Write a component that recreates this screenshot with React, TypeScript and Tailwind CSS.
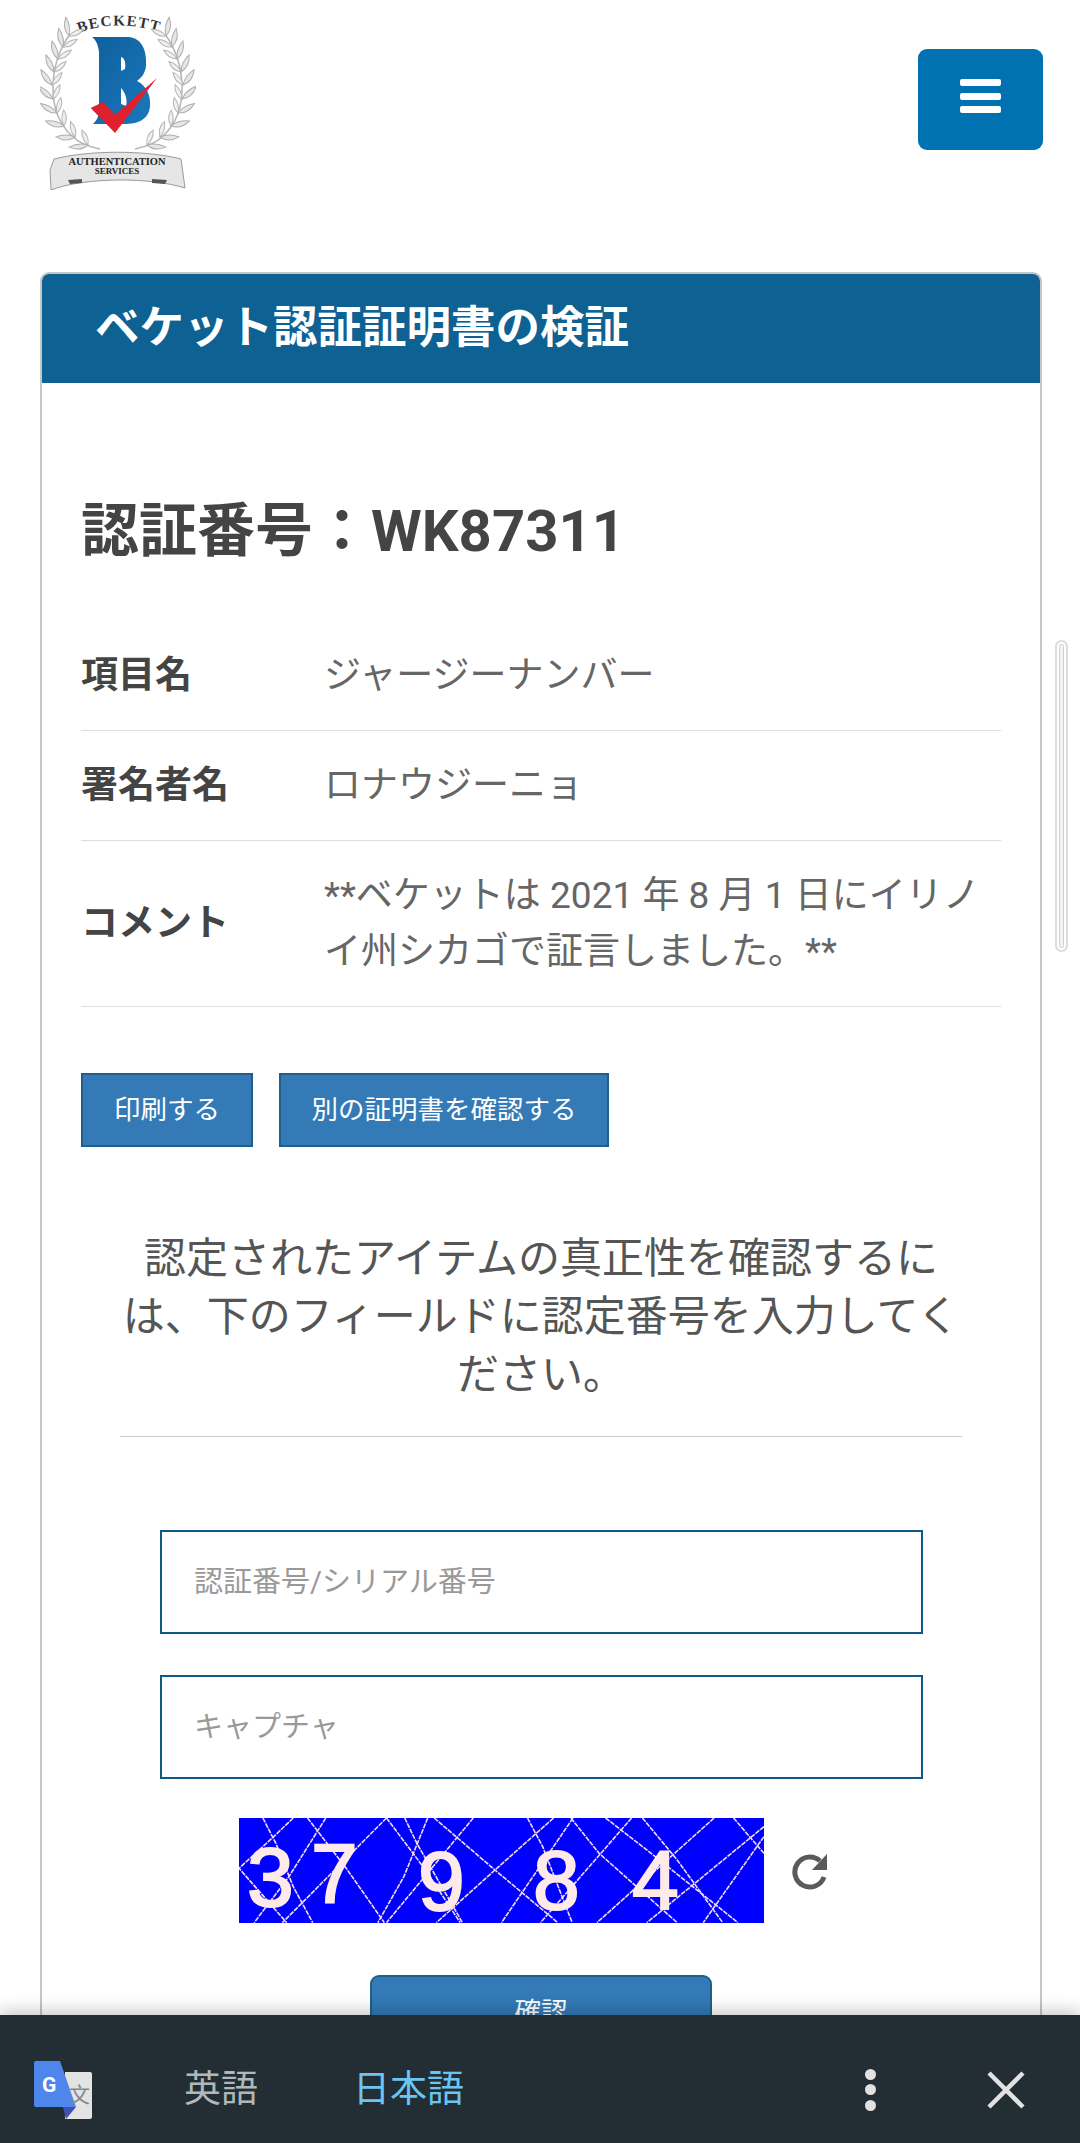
// stem of the left laurel branch, bottom to top
const stem = [
  [88, 145], [75, 137], [64, 126], [57, 113], [53, 99], [52, 85], [54, 72], [58, 59], [63, 47], [69, 36],
];

function Laurel() {
  return (
    <g>
      <path d="M70 34 C50 62 44 110 72 136 C80 144 90 147 100 149" fill="none" stroke="#b5b5b5" strokeWidth="1.5" />
      {stem.map(([x, y], i) => {
        const next = stem[Math.min(i + 1, stem.length - 1)];
        const prev = stem[Math.max(i - 1, 0)];
        const a = (Math.atan2(next[1] - prev[1], next[0] - prev[0]) * 180) / Math.PI;
        return (
          <g key={i}>
            <path d="M0 0 Q9 -6 19 0 Q9 4 0 0 Z" transform={`translate(${x} ${y}) rotate(${a - 38})`} fill="#e6e6e6" stroke="#adadad" strokeWidth="1" />
            <path d="M0 0 Q8 -4 16 0 Q8 5 0 0 Z" transform={`translate(${x} ${y}) rotate(${a + 36})`} fill="#efefef" stroke="#b5b5b5" strokeWidth="1" />
          </g>
        );
      })}
    </g>
  );
}

function Logo() {
  return (
    <svg viewBox="40 14 156 176" className="w-[156px] h-[176px]">
      <defs>
        <linearGradient id="bBlue" x1="0" y1="0" x2="1" y2="1">
          <stop offset="0" stopColor="#0f5f9c" />
          <stop offset="1" stopColor="#1a78bd" />
        </linearGradient>
        <path id="beckettArc" d="M79 33 Q118 18 162 33" fill="none" />
      </defs>
      <text fontFamily="'Liberation Serif', serif" fontWeight="700" fontSize="15" fill="#333" letterSpacing="1.4">
        <textPath href="#beckettArc">BECKETT</textPath>
      </text>
      <Laurel />
      <g transform="translate(235 0) scale(-1 1)">
        <Laurel />
      </g>
      <path d="M92 37 H128 C143 38 147 52 146 66 C145 74 141 78 137 81 C147 86 151 96 150 107 C148 120 138 124 124 124 H93 C97 120 99 116 99 110 V52 C98 44 96 40 92 37 Z" fill="url(#bBlue)" />
      <path d="M121 57 C125 58 126 64 125 69 L121 71 Z M121 88 C125 92 128 100 126 106 L121 104 Z" fill="#fff" />
      <path d="M90.7 108 L103 102 L115 115 L157 78 L115 133 Z" fill="#e0202c" />
      <path d="M54 159 C90 150 145 150 181 159 L185 188 C150 177 85 177 51 190 L50 170 Z" fill="#e6e6e6" stroke="#9a9a9a" strokeWidth="1" />
      <path d="M68 180 L82 179 L82 183 L70 184 Z M152 179 L167 180 L165 184 L152 183 Z" fill="#555" />
      <text x="117" y="165" textAnchor="middle" fontFamily="'Liberation Serif', serif" fontWeight="700" fontSize="10.5" fill="#222">AUTHENTICATION</text>
      <text x="117" y="174" textAnchor="middle" fontFamily="'Liberation Serif', serif" fontWeight="700" fontSize="9" fill="#222">SERVICES</text>
    </svg>
  );
}

// captcha noise, points read off the crop
const noise = [
  [[145, 84], [175, 160], [215, 290], [260, 398]],
  [[215, 84], [170, 140], [90, 235], [200, 398]],
  [[290, 84], [205, 260], [125, 398]],
  [[248, 84], [340, 240], [425, 398]],
  [[430, 84], [190, 398]],
  [[430, 84], [520, 240], [600, 398]],
  [[472, 84], [500, 160], [605, 398]],
  [[525, 84], [470, 260], [410, 398]],
  [[540, 84], [680, 240], [825, 398]],
  [[630, 84], [430, 398]],
  [[815, 84], [680, 240], [545, 398]],
  [[755, 84], [790, 170], [858, 398]],
  [[860, 84], [695, 398]],
  [[855, 84], [920, 190], [1100, 398]],
  [[995, 84], [785, 398]],
  [[935, 84], [1040, 190], [1240, 398]],
  [[1020, 84], [1100, 210], [1205, 398]],
  [[1185, 84], [915, 398]],
  [[1300, 110], [1030, 398]],
  [[1230, 84], [1300, 190]],
  [[1300, 140], [1160, 398]],
];

const digits: [string, number, number][] = [
  ["3", 8, 88],
  ["7", 72, 84],
  ["9", 179, 92],
  ["8", 294, 91],
  ["4", 393, 91],
];

function Captcha() {
  return (
    <svg viewBox="0 0 525 105" className="w-[525px] h-[105px] bg-[#0000ff]">
      {noise.map((line, i) => (
        <polyline
          key={i}
          points={line.map(([x, y]) => `${(x - 90) / 2.305},${(y - 84) / 3}`).join(" ")}
          fill="none"
          stroke="#f3dcf0"
          strokeWidth="1.6"
          strokeDasharray="5 1"
        />
      ))}
      {digits.map(([d, x, y]) => (
        <text key={d} x={x} y={y} fontFamily="'Liberation Sans', sans-serif" fontSize="84" fill="#ffeaea" stroke="#ffeaea" strokeWidth="2">
          {d}
        </text>
      ))}
    </svg>
  );
}

function TranslateIcon() {
  return (
    <svg viewBox="0 0 58 58" className="w-[58px] h-[58px] shrink-0">
      <path d="M31 11 H56 Q58 11 58 13 V56 Q58 58 56 58 H31 Z" fill="#e3e3e3" />
      <path d="M29 46 H42 L32 58 Z" fill="#3f51b5" />
      <path d="M2 0 H26 L42 46 H2 Q0 46 0 44 V2 Q0 0 2 0 Z" fill="#4f86ec" />
      <text x="8" y="31" fontFamily="Roboto, sans-serif" fontWeight="700" fontSize="21" fill="#fff">G</text>
      <text x="35" y="41" fontFamily="'Noto Sans CJK SC', sans-serif" fontSize="21" fill="#7b8a8f">文</text>
    </svg>
  );
}

function Row({ label, children }: { label: string; children: React.ReactNode }) {
  return (
    <div className="flex items-center pt-[27px] pb-[26px] border-b border-[#dddddd]">
      <div className="w-[243px] shrink-0 text-[37px] leading-[56px] font-bold text-[#444444]">{label}</div>
      <div className="flex-1 text-[37px] leading-[56px] text-[#666666]">{children}</div>
    </div>
  );
}

export default function App() {
  return (
    <div
      className="relative w-[1080px] h-[2143px] overflow-hidden bg-white"
      style={{ fontFamily: "Roboto, 'Noto Sans CJK JP', sans-serif" }}
    >
      <header className="flex justify-between h-[272px] pl-[40px] pr-[37px]">
        <div className="pt-[14px]">
          <Logo />
        </div>
        <button className="mt-[49px] w-[125px] h-[101px] rounded-[9px] bg-[#0072b1] flex flex-col items-center gap-[6.5px] pt-[30px]">
          <span className="block w-[41px] h-[7px] rounded-[2px] bg-white" />
          <span className="block w-[41px] h-[7px] rounded-[2px] bg-white" />
          <span className="block w-[41px] h-[7px] rounded-[2px] bg-white" />
        </button>
      </header>

      <section className="mx-[40px] w-[1002px] border-2 border-[#c6c6c6] rounded-[9px] overflow-hidden">
        <div className="h-[109px] bg-[#0e6193] pl-[53px] flex items-center text-[44.5px] font-bold text-white">
          ベケット認証証明書の検証
        </div>

        <div className="px-[39px] pt-[107px]">
          <h1 className="h-[80px] leading-[82px] text-[58px] font-bold text-[#444444] mb-[51px]">認証番号：WK87311</h1>

          <Row label="項目名">ジャージーナンバー</Row>
          <Row label="署名者名">ロナウジーニョ</Row>
          <Row label="コメント">**ベケットは 2021 年 8 月 1 日にイリノイ州シカゴで証言しました。**</Row>

          <div className="flex gap-[26px] mt-[66px]">
            <button className="h-[74px] w-[172px] bg-[#337ab7] border-2 border-[#1f5f8b] text-white text-[26.5px]">印刷する</button>
            <button className="h-[74px] w-[330px] bg-[#337ab7] border-2 border-[#1f5f8b] text-white text-[26.5px]">別の証明書を確認する</button>
          </div>

          <p className="mt-[83px] text-center text-[42px] leading-[58px] text-[#555555] whitespace-nowrap">
            認定されたアイテムの真正性を確認するに
            <br />
            は、下のフィールドに認定番号を入力してく
            <br />
            ださい。
          </p>
          <hr className="mt-[32px] mx-[39px] border-[#cccccc]" />

          <div className="mt-[93px] ml-[79px] mr-[78px] flex flex-col gap-[41px]">
            <input placeholder="認証番号/シリアル番号" className="h-[104px] border-2 border-[#0e5a85] pl-[32px] text-[29px] placeholder:text-[#999999] outline-none" />
            <input placeholder="キャプチャ" className="h-[104px] border-2 border-[#0e5a85] pl-[32px] text-[29px] placeholder:text-[#999999] outline-none" />
          </div>

          <div className="mt-[39px] ml-[158px] flex items-center gap-[27px]">
            <Captcha />
            <svg viewBox="0 0 38 38" className="w-[38px] h-[38px] text-[#5a5a5a]">
              <path d="M33 25 A15 15 0 1 1 29 9" fill="none" stroke="currentColor" strokeWidth="5" />
              <path d="M36 2 V18 H21 Z" fill="currentColor" />
            </svg>
          </div>

          <div className="mt-[52px] flex justify-center">
            <button className="w-[342px] h-[74px] rounded-[9px] bg-[#337ab7] border-2 border-[#1f5f8b] text-white text-[26.5px]">確認</button>
          </div>
        </div>
      </section>

      {/* fake scrollbar over the page */}
      <div className="absolute left-[1055px] top-[640px] w-[13px] h-[312px] rounded-full border-2 border-[#dcdcdc] bg-white p-[2px]">
        <div className="w-full h-full rounded-full border border-[#d0d0d0] bg-[#f2f2f2]" />
      </div>

      {/* translate bar */}
      <div className="absolute left-0 right-0 bottom-0 h-[128px] bg-[#232e34] shadow-[0_-4px_16px_rgba(0,0,0,0.22)] flex items-center pl-[34px] pt-[21px]">
        <TranslateIcon />
        <span className="ml-[92px] text-[37px] text-[#b0b8bb]">英語</span>
        <span className="ml-[95px] text-[37px] text-[#6cc5f0]">日本語</span>
        <div className="ml-[401px] flex flex-col gap-[4.5px]">
          <span className="block w-[11px] h-[11px] rounded-full bg-[#e2e2e2]" />
          <span className="block w-[11px] h-[11px] rounded-full bg-[#e2e2e2]" />
          <span className="block w-[11px] h-[11px] rounded-full bg-[#e2e2e2]" />
        </div>
        <svg viewBox="0 0 38 38" className="ml-[111px] w-[38px] h-[38px]">
          <path d="M2 2 L36 36 M36 2 L2 36" stroke="#e2e2e2" strokeWidth="4.5" />
        </svg>
      </div>
    </div>
  );
}
